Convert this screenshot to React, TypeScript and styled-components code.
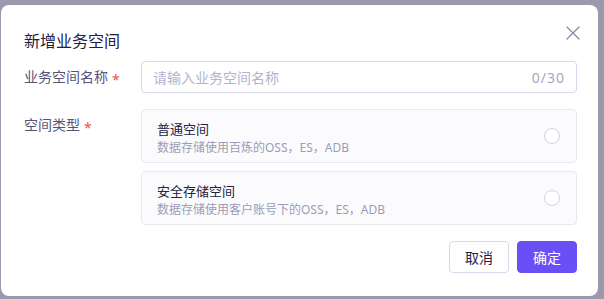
import React from "react";
import styled, { createGlobalStyle } from "styled-components";

const Global = createGlobalStyle`
  html, body { margin: 0; padding: 0; }
  body {
    width: 604px;
    height: 299px;
    overflow: hidden;
    font-family: "Noto Sans", "Noto Sans CJK SC", sans-serif;
    background: #9b99ad;
  }
  * { box-sizing: border-box; }
`;

const Overlay = styled.div`
  width: 604px;
  height: 299px;
  padding: 5px 6px 3px 1px;
  display: flex;
`;

const Dialog = styled.div`
  position: relative;
  flex: 1;
  background: #ffffff;
  border-radius: 8px;
  padding: 24px 21px 23px 23px;
  display: flex;
  flex-direction: column;
`;

const Title = styled.div`
  font-size: 16px;
  line-height: 24px;
  height: 24px;
  color: #22203f;
  margin-bottom: 8px;
`;

const Close = styled.button`
  position: absolute;
  top: 21px;
  right: 18px;
  width: 14px;
  height: 14px;
  padding: 0;
  border: 0;
  background: transparent;
  display: flex;
  align-items: center;
  justify-content: center;
`;

const Row = styled.div<{ $gap?: number }>`
  display: flex;
  align-items: flex-start;
  margin-bottom: ${(p) => p.$gap ?? 0}px;
`;

const Label = styled.div`
  width: 117px;
  height: 32px;
  flex-shrink: 0;
  font-size: 14px;
  line-height: 32px;
  color: #56547a;
  white-space: nowrap;
`;

const Star = styled.span`
  display: inline-block;
  line-height: 1;
  color: #f0504f;
  margin-left: 4px;
  font-size: 14px;
  vertical-align: -3px;
`;

const Field = styled.div`
  flex: 1;
  display: flex;
  flex-direction: column;
  gap: 8px;
`;

const InputBox = styled.div`
  height: 32px;
  border: 1px solid #d9d8e8;
  border-radius: 4px;
  display: flex;
  align-items: center;
  padding: 0 12px 0 11px;
  font-size: 14px;
`;

const Placeholder = styled.span`
  flex: 1;
  color: #b4b2cc;
`;

const Counter = styled.span`
  color: #a8a6c0;
  letter-spacing: 1px;
  margin-right: -1px;
`;

const Card = styled.div`
  height: 54px;
  border: 1px solid #e9e8f2;
  background: #fbfbfd;
  border-radius: 4px;
  padding: 9px 16px 0 15px;
  display: flex;
  align-items: center;
`;

const CardText = styled.div`
  flex: 1;
  align-self: flex-start;
  display: flex;
  flex-direction: column;
`;

const CardTitle = styled.div`
  font-size: 13px;
  line-height: 20px;
  color: #24223f;
`;

const CardDesc = styled.div`
  font-size: 12px;
  line-height: 18px;
  color: #9d9bb8;
`;

const Radio = styled.span`
  width: 16px;
  height: 16px;
  border-radius: 50%;
  border: 1px solid #d3d2e2;
  background: #ffffff;
  margin-top: -9px;
`;

const Footer = styled.div`
  display: flex;
  justify-content: flex-end;
  gap: 8px;
  margin-top: 16px;
`;

const Button = styled.button<{ $primary?: boolean }>`
  width: 60px;
  height: 32px;
  border-radius: 4px;
  font-family: inherit;
  font-size: 14px;
  padding: 0;
  border: 1px solid ${(p) => (p.$primary ? "#6a4ff6" : "#d9d8e8")};
  background: ${(p) => (p.$primary ? "#6a4ff6" : "#ffffff")};
  color: ${(p) => (p.$primary ? "#ffffff" : "#24223f")};
`;

const options = [
  { title: "普通空间", desc: "数据存储使用百炼的OSS，ES，ADB" },
  { title: "安全存储空间", desc: "数据存储使用客户账号下的OSS，ES，ADB" },
];

export default function App() {
  return (
    <>
      <Global />
      <Overlay>
        <Dialog>
          <Title>新增业务空间</Title>
          <Close aria-label="close">
            <svg width="14" height="14" viewBox="0 0 14 14">
              <path d="M1 1L13 13M13 1L1 13" stroke="#8a88a2" strokeWidth="1.3" strokeLinecap="round" />
            </svg>
          </Close>
          <Row $gap={16}>
            <Label>
              业务空间名称<Star>*</Star>
            </Label>
            <Field>
              <InputBox>
                <Placeholder>请输入业务空间名称</Placeholder>
                <Counter>0/30</Counter>
              </InputBox>
            </Field>
          </Row>
          <Row>
            <Label>
              空间类型<Star>*</Star>
            </Label>
            <Field>
              {options.map((o) => (
                <Card key={o.title}>
                  <CardText>
                    <CardTitle>{o.title}</CardTitle>
                    <CardDesc>{o.desc}</CardDesc>
                  </CardText>
                  <Radio />
                </Card>
              ))}
            </Field>
          </Row>
          <Footer>
            <Button>取消</Button>
            <Button $primary>确定</Button>
          </Footer>
        </Dialog>
      </Overlay>
    </>
  );
}
